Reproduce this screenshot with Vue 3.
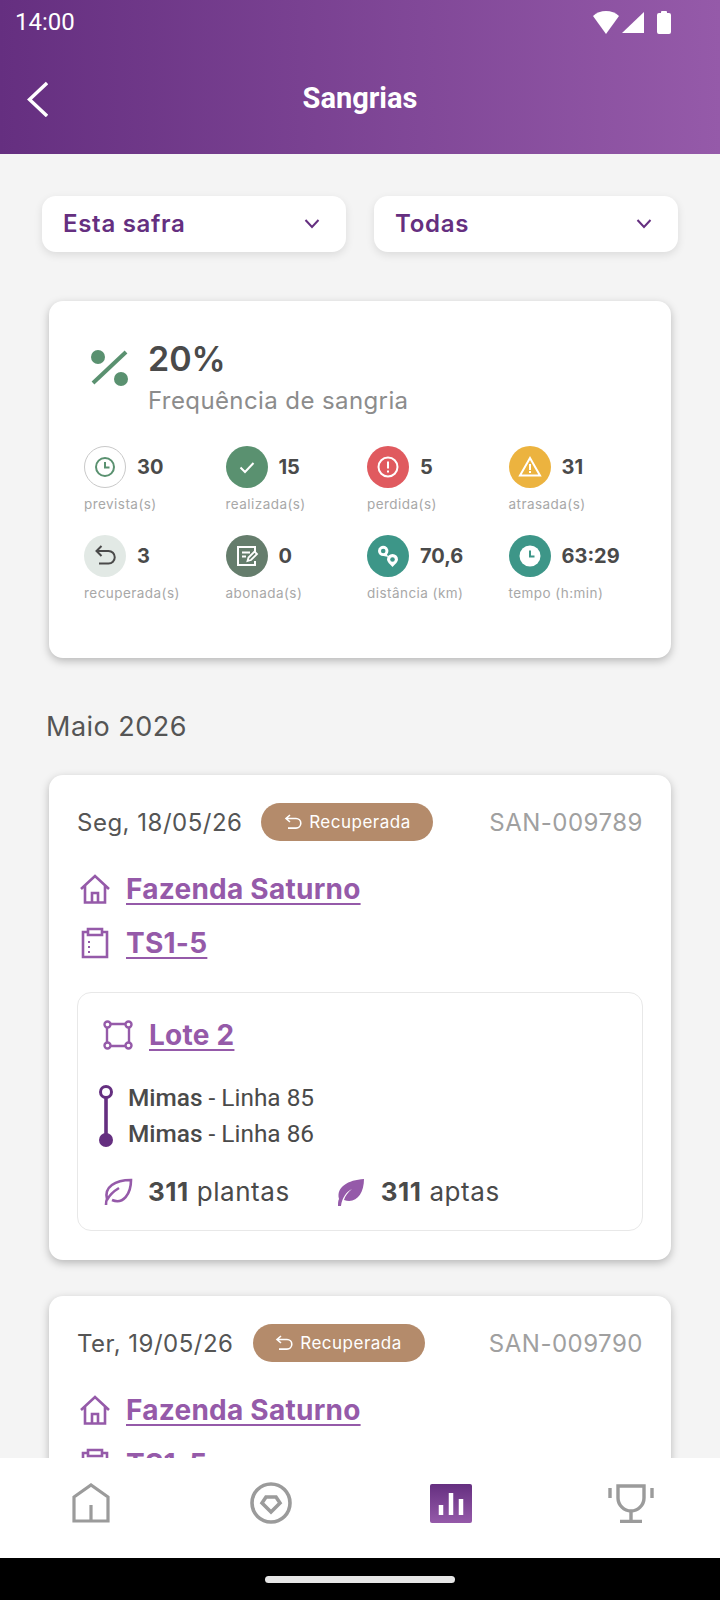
<script setup>
const stats = [
  { k: 'clock', v: '30', l: 'prevista(s)', c: 'outline' },
  { k: 'check', v: '15', l: 'realizada(s)', c: 'green' },
  { k: 'alert', v: '5', l: 'perdida(s)', c: 'red' },
  { k: 'warn', v: '31', l: 'atrasada(s)', c: 'yellow' },
  { k: 'undo', v: '3', l: 'recuperada(s)', c: 'pale' },
  { k: 'note', v: '0', l: 'abonada(s)', c: 'moss' },
  { k: 'pins', v: '70,6', l: 'distância (km)', c: 'teal' },
  { k: 'time', v: '63:29', l: 'tempo (h:min)', c: 'teal' },
]
</script>

<template>
  <div class="phone">
    <header class="top">
      <div class="status">
        <span class="clock">14:00</span>
        <div class="status-icons">
          <svg width="26" height="23" viewBox="0 0 26 23"><path d="M0 5C3.500 1.800 8 0 13 0s9.500 1.800 13 5L13 23z" fill="#fff"/></svg>
          <svg class="cell" width="22" height="21" viewBox="0 0 22 21"><path d="M22 0v21H0z" fill="#fff"/></svg>
          <svg width="14" height="23" viewBox="0 0 14 23"><path d="M4 2V1a1 1 0 0 1 1-1h4a1 1 0 0 1 1 1v1h2a2 2 0 0 1 2 2v17a2 2 0 0 1-2 2H2a2 2 0 0 1-2-2V4a2 2 0 0 1 2-2z" fill="#fff"/></svg>
        </div>
      </div>
      <div class="titlebar">
        <svg class="back" width="24" height="36" viewBox="0 0 24 36"><path d="M23 2L5.500 18.500 23 35" fill="none" stroke="#fff" stroke-width="3.400"/></svg>
        <h1>Sangrias</h1>
      </div>
    </header>

    <main class="content">
      <div class="filters">
        <div class="select"><span>Esta safra</span><svg width="16" height="12" viewBox="0 0 16 12"><path d="M1.500 2l6.500 7 6.500-7" fill="none" stroke="#652f80" stroke-width="2"/></svg></div>
        <div class="select"><span>Todas</span><svg width="16" height="12" viewBox="0 0 16 12"><path d="M1.500 2l6.500 7 6.500-7" fill="none" stroke="#652f80" stroke-width="2"/></svg></div>
      </div>

      <section class="card summary">
        <div class="sum-head">
          <svg class="pct-icon" width="40" height="40" viewBox="0 0 40 40">
            <circle cx="8" cy="9" r="7" fill="#5a9170"/><circle cx="31" cy="31" r="7" fill="#5a9170"/>
            <path d="M3 35L36 4" stroke="#5a9170" stroke-width="4"/>
          </svg>
          <div>
            <div class="pct">20%</div>
            <div class="pct-label">Frequência de sangria</div>
          </div>
        </div>
        <div class="stats">
          <div v-for="s in stats" :key="s.l" class="stat">
            <div class="stat-top">
              <span class="disc" :class="s.c">
                <svg width="24" height="24" viewBox="0 0 24 24" fill="none" stroke="currentColor" stroke-width="2">
                  <template v-if="s.k === 'clock'"><circle cx="12" cy="12" r="9"/><path d="M12 7V12.500H16.500"/></template>
                  <path v-else-if="s.k === 'check'" d="M5.500 12.500l4.500 4.500L18.500 8"/>
                  <template v-else-if="s.k === 'alert'"><circle cx="12" cy="12" r="9.500"/><path d="M12 6.500v7M12 15.500v2"/></template>
                  <template v-else-if="s.k === 'warn'"><path d="M12 3L22 20.500H2z"/><path d="M12 9v6M12 16v2"/></template>
                  <path v-else-if="s.k === 'undo'" d="M8.500 2L3.500 7 8.500 12M4 7H15.500a6 6 0 0 1 0 12.500H6"/>
                  <template v-else-if="s.k === 'note'"><path d="M20 9V3H3v18h17v-4"/><path d="M7 8.500h8M7 12.500h4M12.500 17l1-3.500 6-6 2.500 2.500-6 6z" stroke-width="1.800"/></template>
                  <template v-else-if="s.k === 'pins'">
                    <path d="M2 7a5.200 5.200 0 1 1 9 3.500L12.500 13 7.500 12A5.200 5.200 0 0 1 2 7z" fill="#fff" stroke="none"/><circle cx="7.200" cy="7" r="2.300" fill="#3d9688" stroke="none"/>
                    <path d="M11 15.500a5.500 5.500 0 1 1 11 0c0 2-2.500 4.500-5.500 7.500-3-3-5.500-5.500-5.500-7.500z" fill="#fff" stroke="none"/><circle cx="16.500" cy="15.500" r="2.300" fill="#3d9688" stroke="none"/>
                  </template>
                  <template v-else><circle cx="12" cy="12" r="10.500" fill="#fff" stroke="none"/><path d="M12 6.500v6h4.500" stroke="#3d9688"/></template>
                </svg>
              </span>
              <span class="stat-v">{{ s.v }}</span>
            </div>
            <div class="stat-l">{{ s.l }}</div>
          </div>
        </div>
      </section>

      <h2 class="month">Maio 2026</h2>

      <section class="card item">
        <div class="row-head">
          <span class="date">Seg, 18/05/26</span>
          <span class="badge">
            <svg width="18" height="16" viewBox="0 0 18 16" fill="none" stroke="#fff" stroke-width="1.600"><path d="M6 1L2 4.500 6 8M2.500 4.500H12a4.800 4.800 0 0 1 0 9.600H4"/></svg>
            Recuperada
          </span>
          <span class="code">SAN-009789</span>
        </div>
        <div class="link-row first">
          <svg width="32" height="30" viewBox="0 0 32 30" fill="none" stroke="#955aa9" stroke-width="2.600"><path d="M2 15L16 2l14 13M6 12v16.500h20V12M13 28v-9h6v9"/></svg>
          <a>Fazenda Saturno</a>
        </div>
        <div class="link-row">
          <svg width="32" height="32" viewBox="0 0 32 32" fill="none" stroke="#955aa9" stroke-width="2.600"><path d="M9 5H4v25h24V5h-5M9 2h14v6H9z"/><path d="M10 14v2M10 19v2M10 24v2" stroke-width="2"/></svg>
          <a>TS1-5</a>
        </div>
        <div class="inner">
          <div class="link-row lote">
            <svg width="30" height="30" viewBox="0 0 30 30" fill="none" stroke="#955aa9" stroke-width="2.400">
              <path d="M7 4h16M7 26h16M4 7v16M26 7v16"/>
              <circle cx="4.500" cy="4.500" r="3"/><circle cx="25.500" cy="4.500" r="3"/><circle cx="4.500" cy="25.500" r="3"/><circle cx="25.500" cy="25.500" r="3"/>
            </svg>
            <a>Lote 2</a>
          </div>
          <div class="lines">
            <svg class="track" width="16" height="64" viewBox="0 0 16 64">
              <circle cx="8" cy="8" r="5.500" fill="#fff" stroke="#652f80" stroke-width="3"/>
              <path d="M8 13v44" stroke="#652f80" stroke-width="3.600"/>
              <circle cx="8" cy="56" r="7" fill="#652f80"/>
            </svg>
            <div class="line-text">
              <div><b>Mimas</b> - Linha 85</div>
              <div><b>Mimas</b> - Linha 86</div>
            </div>
          </div>
          <div class="plants">
            <div class="plant">
              <svg width="30" height="30" viewBox="0 0 30 30" fill="none" stroke="#955aa9" stroke-width="2.600"><path d="M3 28c0-2 0-4 1-6C1 10 12 3 28 3c0 14-8 25-19 20M4 23C7 17 11 14 16 11"/></svg>
              <span><b>311</b> plantas</span>
            </div>
            <div class="plant">
              <svg width="30" height="30" viewBox="0 0 30 30"><path d="M2 29c0-3 0-5 1-7C0 10 12 3 28 2c0 15-8 25-20 21 1-4 4-8 8-11-6 3-10 9-11 17z" fill="#955aa9"/></svg>
              <span><b>311</b> aptas</span>
            </div>
          </div>
        </div>
      </section>

      <section class="card item">
        <div class="row-head">
          <span class="date">Ter, 19/05/26</span>
          <span class="badge">
            <svg width="18" height="16" viewBox="0 0 18 16" fill="none" stroke="#fff" stroke-width="1.600"><path d="M6 1L2 4.500 6 8M2.500 4.500H12a4.800 4.800 0 0 1 0 9.600H4"/></svg>
            Recuperada
          </span>
          <span class="code">SAN-009790</span>
        </div>
        <div class="link-row first">
          <svg width="32" height="30" viewBox="0 0 32 30" fill="none" stroke="#955aa9" stroke-width="2.600"><path d="M2 15L16 2l14 13M6 12v16.500h20V12M13 28v-9h6v9"/></svg>
          <a>Fazenda Saturno</a>
        </div>
        <div class="link-row">
          <svg width="32" height="32" viewBox="0 0 32 32" fill="none" stroke="#955aa9" stroke-width="2.600"><path d="M9 5H4v25h24V5h-5M9 2h14v6H9z"/></svg>
          <a>TS1-5</a>
        </div>
      </section>
    </main>

    <nav class="tabs">
      <svg width="38" height="40" viewBox="0 0 38 40" fill="none" stroke="#9b9b9b" stroke-width="3.200"><path d="M2 14L19 2l17 12v24H2zM19 38V22"/></svg>
      <svg width="42" height="42" viewBox="0 0 42 42" fill="none" stroke="#9b9b9b" stroke-width="3.600"><circle cx="21" cy="21" r="19"/><path d="M16 15h10l4 6-9 9-9-9z"/></svg>
      <svg width="42" height="39" viewBox="0 0 42 39"><defs><linearGradient id="bar" x1="0" y1="0" x2="0" y2="1"><stop offset="0" stop-color="#652f80"/><stop offset="1" stop-color="#955aa9"/></linearGradient></defs><rect width="42" height="39" rx="2" fill="url(#bar)"/><path d="M11 31V21M21 31V9M31 31V15" stroke="#fff" stroke-width="4.500"/></svg>
      <svg width="46" height="39" viewBox="0 0 46 39" fill="none" stroke="#9b9b9b" stroke-width="3.400"><path d="M10 2h26v12c0 7-6 13-13 13S10 21 10 14zM23 27v9M12 37.500h22M2 4v10M44 4v10"/></svg>
    </nav>
    <div class="sysbar"><span></span></div>
  </div>
</template>

<style>
body { margin: 0; background: #f4f4f4; }
</style>

<style scoped>
.phone {
  width: 720px;
  height: 1600px;
  display: flex;
  flex-direction: column;
  overflow: hidden;
  background: #f4f4f4;
  font-family: "Inter", "Liberation Sans", sans-serif;
  color: #4a4a4a;
}
.top {
  height: 154px;
  flex: none;
  background: linear-gradient(90deg, #652f80, #955aa9);
  color: #fff;
  font-family: Roboto, sans-serif;
}
.status {
  height: 44px;
  padding: 0 49px 0 15px;
  display: flex;
  justify-content: space-between;
  align-items: center;
}
.clock { font-size: 24px; line-height: 44px; }
.status-icons { display: flex; align-items: center; }
.status-icons .cell { margin: 0 13px 0 3px; }
.titlebar {
  height: 110px;
  position: relative;
  display: flex;
  justify-content: center;
  align-items: center;
}
.titlebar h1 { margin: 0 0 2px; font-size: 29px; font-weight: 700; }
.back { position: absolute; left: 24px; top: 37px; }

.content {
  flex: 1;
  min-height: 0;
  overflow: hidden;
}
.filters {
  display: flex;
  gap: 28px;
  padding: 42px 42px 0;
}
.select {
  flex: 1;
  height: 56px;
  box-sizing: border-box;
  padding: 0 26px 0 21px;
  display: flex;
  justify-content: space-between;
  align-items: center;
  background: #fff;
  border-radius: 14px;
  box-shadow: 0 3px 8px rgba(0, 0, 0, .1);
  color: #652f80;
  font-size: 24px;
  font-weight: 600;
  letter-spacing: .7px;
}
.select span { margin-top: -2px; }
.card {
  margin: 0 49px;
  background: #fff;
  border-radius: 14px;
  box-shadow: 0 3px 8px rgba(0, 0, 0, .25);
}
.summary {
  margin-top: 49px;
  height: 357px;
  box-sizing: border-box;
  padding: 38px 35px 0;
}
.sum-head { display: flex; gap: 18px; padding-left: 6px; align-items: flex-start; }
.pct-icon { margin-top: 9px; }
.pct { font-size: 34px; font-weight: 600; line-height: 40px; }
.pct-label { font-size: 24px; color: #8c8c8c; line-height: 36px; letter-spacing: .4px; margin-top: 4px; }
.stats {
  display: grid;
  grid-template-columns: repeat(4, 141.500px);
  grid-auto-rows: 89px;
  margin-top: 27px;
}
.stat-top { display: flex; align-items: center; gap: 11px; }
.disc {
  width: 42px;
  height: 42px;
  flex: none;
  box-sizing: border-box;
  border-radius: 50%;
  display: flex;
  align-items: center;
  justify-content: center;
  color: #fff;
}
.outline { border: 1.500px solid #c9c9c9; color: #5a9170; }
.green { background: #5a9170; }
.red { background: #e05a5f; }
.yellow { background: #ecb33f; }
.pale { background: #e2e9e5; color: #4a4a4a; }
.moss { background: #657d6c; }
.teal { background: #3d9688; }
.stat-v { font-size: 20px; font-weight: 700; }
.stat-l { margin-top: 7px; font-size: 13.500px; line-height: 18px; color: #a8a8a8; letter-spacing: .45px; }

.month {
  margin: 51px 46px 30px;
  font-size: 27px;
  line-height: 36px;
  font-weight: 400;
  color: #555;
  letter-spacing: .5px;
}
.item { padding: 28px 28px 29px; margin-bottom: 36px; }
.row-head { display: flex; align-items: center; height: 38px; }
.date { font-size: 24px; color: #555; margin-right: 19px; letter-spacing: .5px; }
.badge {
  height: 38px;
  box-sizing: border-box;
  width: 172px;
  display: flex;
  align-items: center;
  justify-content: center;
  gap: 7px;
  border-radius: 19px;
  background: #b48b6b;
  color: #fff;
  font-size: 17px;
  letter-spacing: .5px;
}
.code { margin-left: auto; font-size: 24px; color: #a0a0a0; letter-spacing: .5px; }
.link-row { display: flex; align-items: center; gap: 15px; height: 40px; margin-top: 14px; padding-left: 2px; }
.link-row.first { margin-top: 28px; }
.link-row a {
  color: #955aa9;
  font-size: 28px;
  font-weight: 700;
  text-decoration: underline;
  text-underline-offset: 4px;
  letter-spacing: .25px;
}
.inner {
  margin-top: 29px;
  height: 239px;
  box-sizing: border-box;
  border: 1.500px solid #e8e8e8;
  border-radius: 14px;
  padding: 22px 25px;
}
.link-row.lote { margin: 0; gap: 16px; padding: 0; }
.lines { display: flex; gap: 14px; margin-top: 29px; align-items: flex-start; }
.track { margin-left: -5px; }
.line-text { font-family: Roboto, sans-serif; font-size: 24.400px; line-height: 36px; margin-top: -4px; color: #4a4a4a; }
.line-text b { font-weight: 500; }
.plants { display: flex; gap: 46px; margin-top: 24px; }
.plant { display: flex; align-items: center; gap: 15px; font-size: 26px; letter-spacing: .55px; }

.tabs {
  height: 100px;
  flex: none;
  background: #fff;
  display: grid;
  grid-template-columns: repeat(4, 180px);
  justify-items: center;
  align-items: center;
  padding: 0 0 10px 1px;
  box-sizing: border-box;
}
.sysbar {
  height: 42px;
  flex: none;
  background: #000;
  display: flex;
  justify-content: center;
  align-items: center;
}
.sysbar span { width: 190px; height: 7px; border-radius: 4px; background: #e6e6e6; margin-top: 1px; }
</style>
